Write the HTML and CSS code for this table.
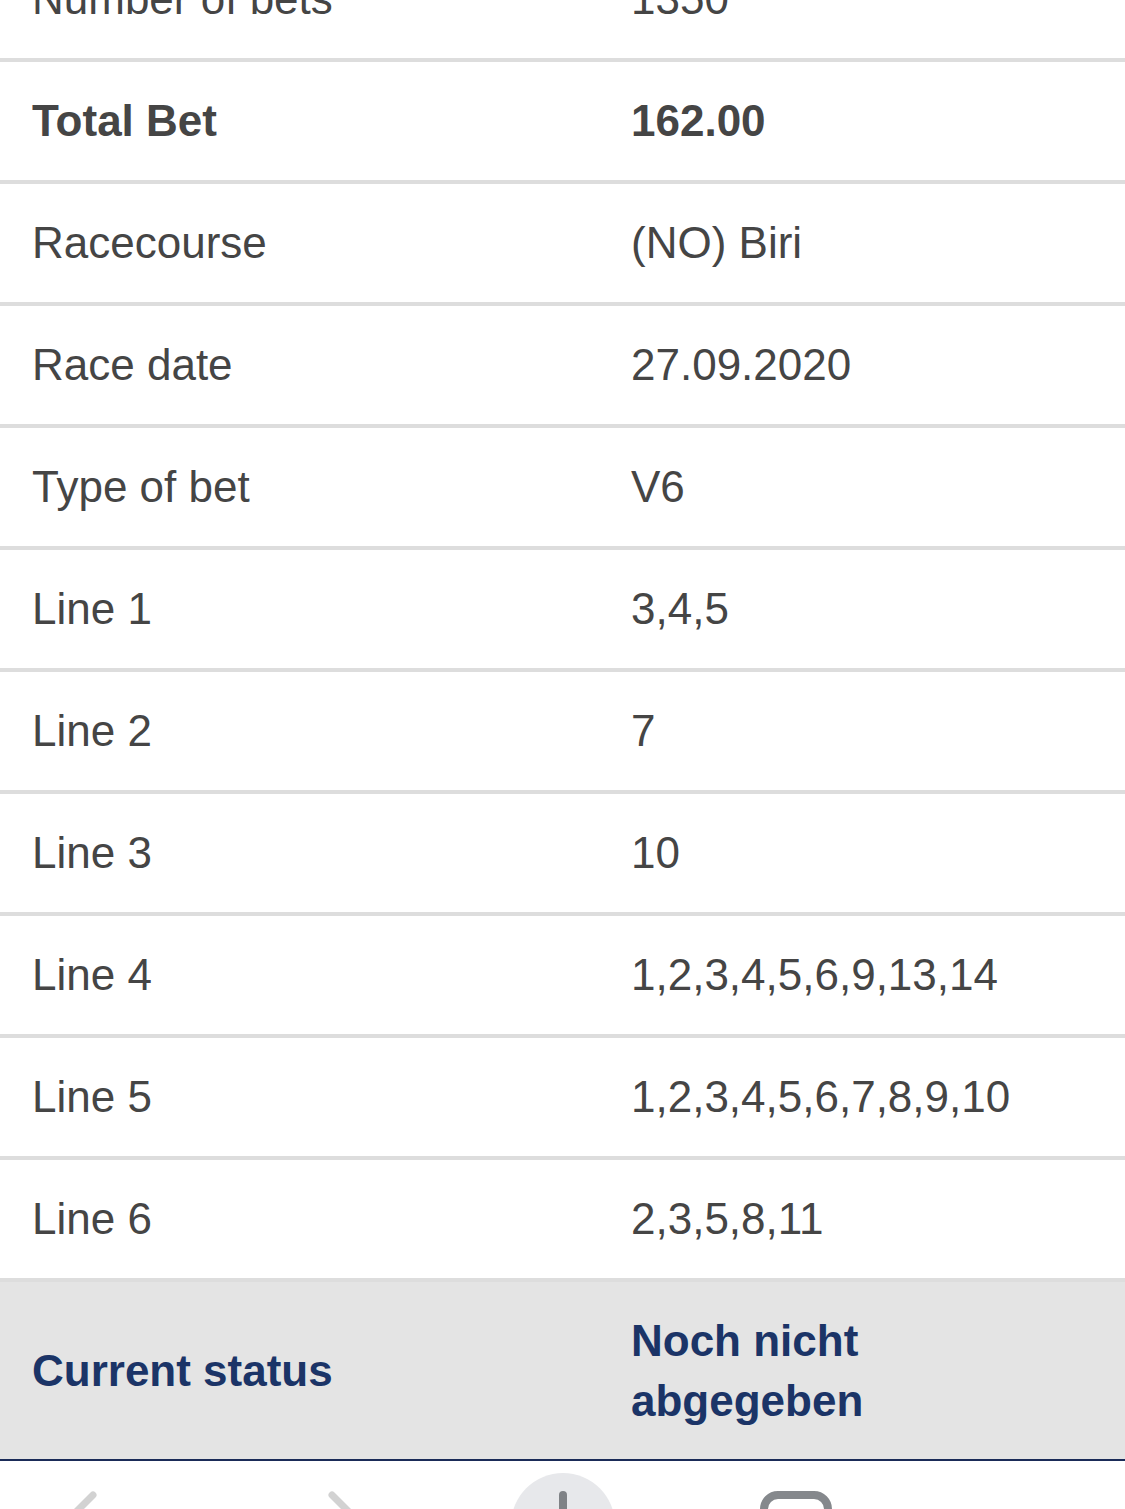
FILE: index.html
```html
<!DOCTYPE html>
<html lang="en">
<head>
<meta charset="utf-8">
<title>Bet details</title>
<link rel="stylesheet" href="styles.css">
</head>
<body>
<div class="page">
  <div class="details">
    <div class="row"><div class="label">Number of bets</div><div class="value">1350</div></div>
    <div class="row row-strong"><div class="label">Total Bet</div><div class="value">162.00</div></div>
    <div class="row"><div class="label">Racecourse</div><div class="value">(NO) Biri</div></div>
    <div class="row"><div class="label">Race date</div><div class="value">27.09.2020</div></div>
    <div class="row"><div class="label">Type of bet</div><div class="value">V6</div></div>
    <div class="row"><div class="label">Line 1</div><div class="value">3,4,5</div></div>
    <div class="row"><div class="label">Line 2</div><div class="value">7</div></div>
    <div class="row"><div class="label">Line 3</div><div class="value">10</div></div>
    <div class="row"><div class="label">Line 4</div><div class="value">1,2,3,4,5,6,9,13,14</div></div>
    <div class="row"><div class="label">Line 5</div><div class="value">1,2,3,4,5,6,7,8,9,10</div></div>
    <div class="row"><div class="label">Line 6</div><div class="value">2,3,5,8,11</div></div>
    <div class="row row-status"><div class="label">Current status</div><div class="value">Noch nicht<br>abgegeben</div></div>
  </div>
  <div class="toolbar">
    <svg class="toolbar-icons" width="1125" height="100" viewBox="0 0 1125 100" aria-hidden="true">
      <path d="M93 34 L70 57 L93 80" fill="none" stroke="#d2d2d2" stroke-width="7" stroke-linecap="round" stroke-linejoin="round"/>
      <path d="M332 34 L355 57 L332 80" fill="none" stroke="#d2d2d2" stroke-width="7" stroke-linecap="round" stroke-linejoin="round"/>
      <circle cx="563" cy="64" r="52" fill="#e7e8eb"/>
      <path d="M563 34 L563 80" fill="none" stroke="#7f8286" stroke-width="8" stroke-linecap="round"/>
      <rect x="764" y="34" width="64" height="60" rx="14" fill="none" stroke="#85888c" stroke-width="8"/>
    </svg>
  </div>
</div>
</body>
</html>
```

FILE: styles.css
```css
html, body {
  margin: 0;
  padding: 0;
  background: #ffffff;
}

.page {
  font-family: "Liberation Sans", Arial, Helvetica, sans-serif;
  color: #454545;
}

.details {
  margin-top: -60px;
}

.row {
  display: grid;
  grid-template-columns: 599px 1fr;
  align-items: center;
  padding: 29px 32px;
  border-bottom: 4px solid #dddddd;
  font-size: 44px;
  line-height: 60px;
}

.row-strong {
  font-weight: bold;
}

.row-status {
  background: #e4e4e4;
  color: #1b3467;
  font-weight: bold;
  padding: 29px 32px 28px;
  border-bottom: 2px solid #1a2b58;
}

.toolbar {
  height: 100px;
  background: #ffffff;
}

.toolbar-icons {
  display: block;
}
```
